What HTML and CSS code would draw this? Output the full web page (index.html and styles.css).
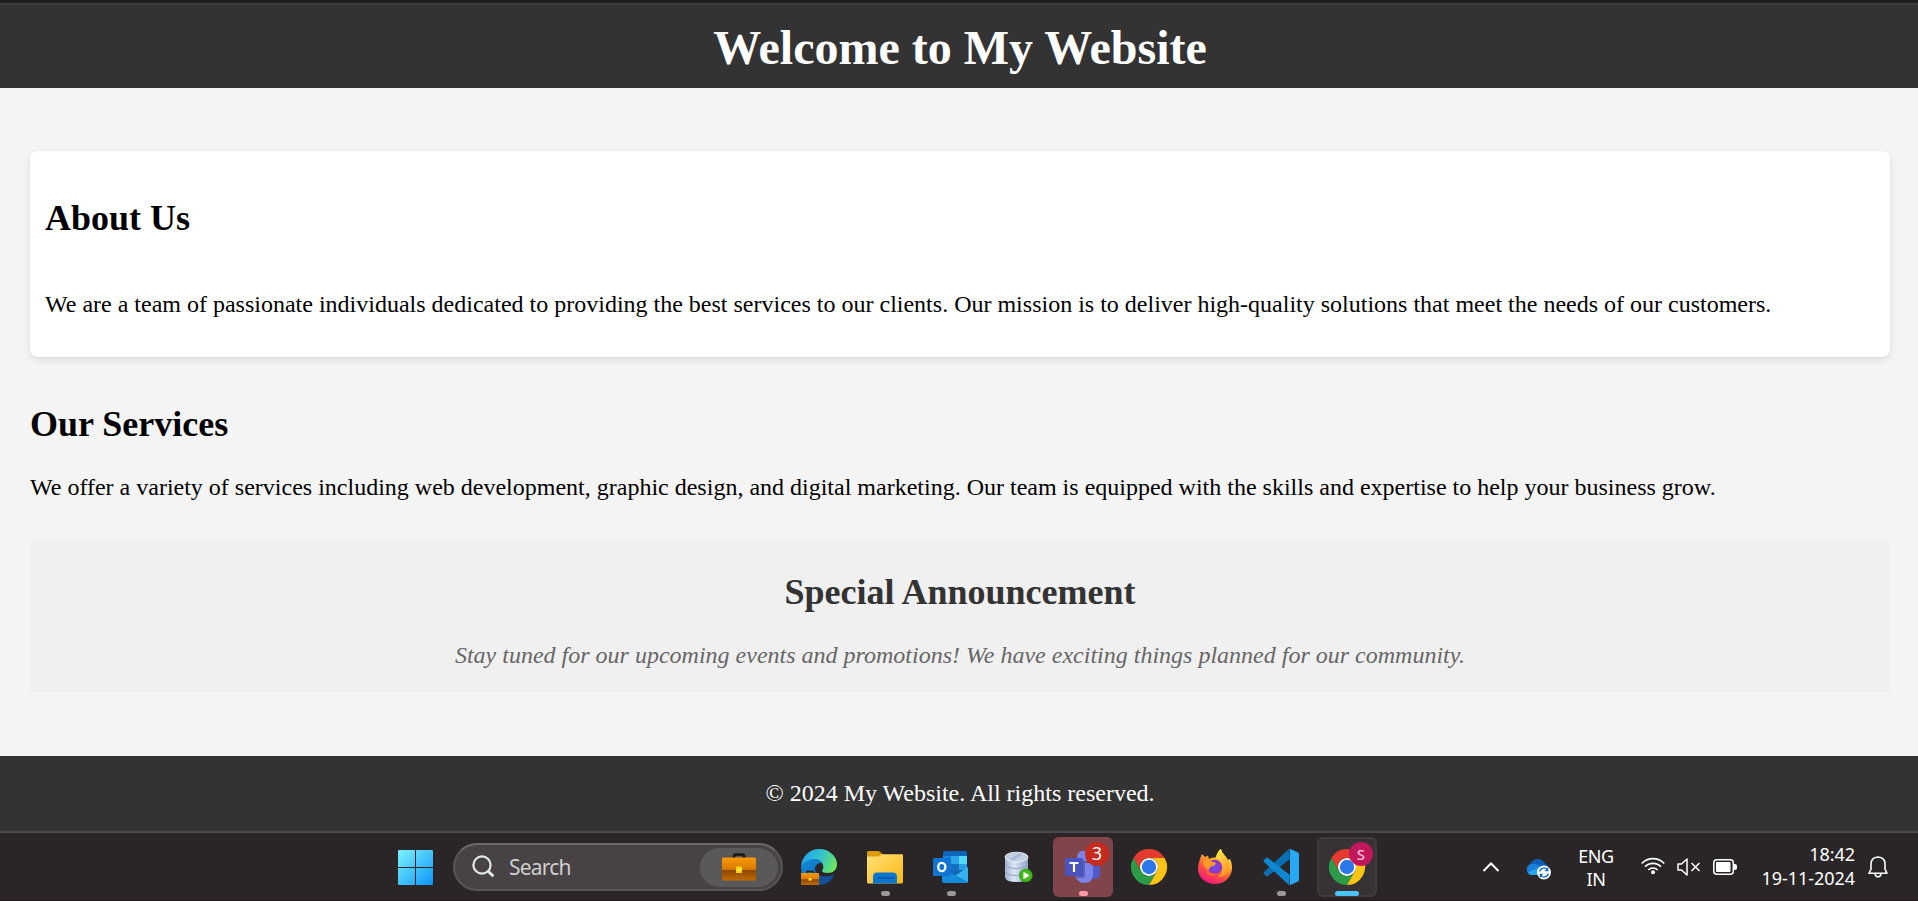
FILE: index.html
```html
<!DOCTYPE html>
<html lang="en">
<head>
<meta charset="utf-8">
<title>My Website</title>
<link rel="stylesheet" href="styles.css">
</head>
<body>
<header class="site-header"><h1>Welcome to My Website</h1></header>
<main class="content">
  <section class="card">
    <h2>About Us</h2>
    <p>We are a team of passionate individuals dedicated to providing the best services to our clients. Our mission is to deliver high-quality solutions that meet the needs of our customers.</p>
  </section>
  <section class="services">
    <h2>Our Services</h2>
    <p>We offer a variety of services including web development, graphic design, and digital marketing. Our team is equipped with the skills and expertise to help your business grow.</p>
  </section>
  <section class="announcement">
    <h2>Special Announcement</h2>
    <p>Stay tuned for our upcoming events and promotions! We have exciting things planned for our community.</p>
  </section>
</main>
<footer class="site-footer"><p>© 2024 My Website. All rights reserved.</p></footer>

<nav class="taskbar">
  <svg class="start" width="35" height="35" viewBox="0 0 35 35">
    <defs><linearGradient id="win" gradientUnits="userSpaceOnUse" x1="0" y1="0" x2="35" y2="35"><stop offset="0" stop-color="#7cf3ff"/><stop offset=".5" stop-color="#45c4fb"/><stop offset="1" stop-color="#0a94f8"/></linearGradient></defs>
    <path fill="url(#win)" d="M1 0h16v17H0V1q0-1 1-1zM18 0h16q1 0 1 1v16H18zM0 18h17v17H1q-1 0-1-1zM18 18h17v16q0 1-1 1H18z"/>
  </svg>
  <div class="search">
    <svg class="magnifier" width="24" height="24" viewBox="0 0 24 24" fill="none" stroke="#e4e8ea" stroke-width="2.2"><circle cx="10" cy="10" r="8.6"/><path stroke-width="3" d="M16 16l5.300 5.300"/></svg>
    <span class="search-label">Search</span>
    <div class="search-highlight">
      <svg width="34" height="28" viewBox="0 0 34 28">
        <defs><linearGradient id="case" x1="0" y1="0" x2="0" y2="1"><stop offset="0" stop-color="#fb9a00"/><stop offset=".52" stop-color="#d87a00"/><stop offset=".55" stop-color="#8d4800"/><stop offset="1" stop-color="#c16b00"/></linearGradient></defs>
        <path d="M12 5V3q0-1.5 2-1.500h6q2 0 2 1.500v2" fill="none" stroke="#161616" stroke-width="2.600"/>
        <rect y="4.500" width="34" height="23" rx="1.500" fill="url(#case)"/>
        <rect x="14" y="13.500" width="6" height="6.500" fill="#ffd200"/><rect x="16" y="16" width="3" height="1.500" fill="#fff09a"/>
      </svg>
    </div>
  </div>
  <div class="apps">
    <div class="app"><svg viewBox="-15 -12 66 60">
      <defs>
        <linearGradient id="e1" x1="0" y1=".3" x2="1" y2=".6"><stop offset="0" stop-color="#23a5e8"/><stop offset=".5" stop-color="#32c4cf"/><stop offset="1" stop-color="#6fe65b"/></linearGradient>
        <linearGradient id="e2" x1="0" y1="0" x2=".6" y2="1"><stop offset="0" stop-color="#1491dc"/><stop offset="1" stop-color="#0a62b5"/></linearGradient>
      </defs>
      <path fill="#12509b" d="M14 14C12 25 20 30 33 26C30 33 24 36 17 36C10 34 5 22 14 14z"/>
      <path fill="url(#e2)" d="M0 18C1 8 19 7 22 15C18 13 14 17 14 21C14 28 17 32 19 35C8 37 0 29 0 18z"/>
      <path fill="#2a2627" d="M22 15C18 12 14 16 14 20Q15 25 21 26L27 24Q21 24 21 22Q23 19 22 15z"/>
      <path fill="url(#e1)" d="M0 17C1 7 9 0 18 0C29 0 36 8 36 15C36 21 32 24 27 24C23 24 21 23 21 22C21 21 23 20 22 16C20 8 6 8 0 17z"/>
      <path d="M6 24v-1.500h6V24" fill="none" stroke="#222" stroke-width="1.500"/>
      <rect y="24" width="18" height="12" rx=".7" fill="url(#case)"/><rect x="7.600" y="29" width="3" height="2.600" fill="#ffd83a"/>
    </svg></div>
    <div class="app"><svg viewBox="-15 -12 66 60">
      <defs><linearGradient id="fold" x1="0" y1="0" x2="1" y2="1"><stop offset="0" stop-color="#ffe178"/><stop offset="1" stop-color="#f9b812"/></linearGradient></defs>
      <path fill="#dd9c06" d="M0 3.500Q0 2 1.500 2H11q1 0 2 1l3 2.500V12H0z"/>
      <path fill="url(#fold)" d="M0 8.500Q0 7.500 1 7.500h10l4-2.300h20q1 0 1 1V33q0 1.600-1.600 1.600H1.600Q0 34.600 0 33z"/>
      <path fill="#0d76cf" d="M6 34.600V28q0-4.400 4.400-4.400h15.200Q30 23.600 30 28v6.600z"/><path fill="#0c5da8" d="M12 28h13.500q1 0 1 1t-1 1H11.500q-1 0-1-1t1-1z"/>
    </svg><i class="dot"></i></div>
    <div class="app"><svg viewBox="-15 -12 66 60">
      <rect x="10" y="2" width="24" height="22" rx="1.500" fill="#0b65bb"/>
      <path fill="#1485da" d="M10 7h8v8h-8z"/><path fill="#2ca4e9" d="M18 7h8v8h-8z"/><path fill="#4fd8fc" d="M26 7h8v8h-8z"/><path fill="#1470bf" d="M18 15h8v7h-8z"/><path fill="#27a0e8" d="M26 15h8v6h-8z"/>
      <path fill="#1668b4" d="M18 22h10l-6 5h-6z"/>
      <path fill="#35b2ef" d="M35 18v14q0 2-2 2H11z"/><path fill="#168bdd" d="M9 19l26 14q-.6 1-2 1H11q-2 0-2-2z"/>
      <rect y="9" width="18" height="18" rx="1.500" fill="#0f75d2"/><ellipse cx="8.800" cy="18" rx="3.600" ry="4.200" fill="none" stroke="#fff" stroke-width="2.300"/>
    </svg><i class="dot"></i></div>
    <div class="app"><svg viewBox="-15 -12 66 60">
      <defs><linearGradient id="db"><stop offset="0" stop-color="#a3b5d1"/><stop offset=".4" stop-color="#dbe5f4"/><stop offset="1" stop-color="#8fa5c9"/></linearGradient><radialGradient id="play"><stop offset="0" stop-color="#5fd02a"/><stop offset="1" stop-color="#35a812"/></radialGradient></defs>
      <path fill="url(#db)" d="M6 8v20q0 5 11.500 5T29 28V8z"/><ellipse cx="17.500" cy="8" rx="11.500" ry="4.800" fill="#c3d0e4" stroke="#f2f5fa" stroke-width=".8"/>
      <path d="M12 11L22 5" stroke="#a9b9d3" stroke-width="3"/>
      <path d="M6 15q1 4.500 11.500 4.500T29 15M6 22q1 4.500 11.500 4.500T29 22" fill="none" stroke="#8b9fc2" stroke-width=".9"/>
      <circle cx="26.800" cy="26.500" r="6.800" fill="url(#play)"/><path fill="#fff" d="M24.500 22.700v7.600l6-3.800z"/>
    </svg></div>
    <div class="app app-alert"><svg viewBox="-15 -12 66 60">
      <path fill="#5059c9" d="M26 15h9v9q0 6-6 6h-3z"/><circle cx="18" cy="7.500" r="5.800" fill="#7b83eb"/>
      <path fill="#7b83eb" d="M12 14h16v11q0 9-9 9-6 0-8-6z"/>
      <path fill="#5960bd" d="M12 11h7q1 0 1 1v14q0 3-2 3h-6z"/>
      <rect y="9" width="18" height="18" rx="1.500" fill="#4b53bc"/><path d="M4.500 14h9M9 14v9" stroke="#fff" stroke-width="2.200"/>
    </svg><b class="badge badge-red">3</b><i class="dot dot-pink"></i></div>
    <div class="app"><svg viewBox="-15 -12 66 60">
      <g id="chrome"><path fill="#e33b2e" d="M2.400 9A18 18 0 0 1 33.600 9H18A9 9 0 0 0 10.200 22.500z"/><path fill="#2c9b48" d="M2.400 9A18 18 0 0 0 18 36L25.800 22.500A9 9 0 0 1 10.200 22.500z"/><path fill="#fdc413" d="M33.600 9A18 18 0 0 1 18 36L25.800 22.500A9 9 0 0 0 18 9z"/><circle cx="18" cy="18" r="9" fill="#fff"/><circle cx="18" cy="18" r="7.200" fill="#2b78ea"/></g>
    </svg></div>
    <div class="app"><svg viewBox="-15 -12 66 60">
      <defs><linearGradient id="ff" x1=".8" y1="0" x2=".3" y2="1"><stop offset="0" stop-color="#fff44f"/><stop offset=".35" stop-color="#ffb42e"/><stop offset=".65" stop-color="#ff553d"/><stop offset="1" stop-color="#f01383"/></linearGradient><linearGradient id="ffy" x1="0" y1="0" x2=".5" y2="1"><stop offset="0" stop-color="#fff44f"/><stop offset="1" stop-color="#ff9928"/></linearGradient><radialGradient id="ffp"><stop offset="0" stop-color="#6f4df2"/><stop offset="1" stop-color="#9434ba"/></radialGradient></defs>
      <path fill="url(#ff)" d="M1 20C1 14 3 10 5 5L8 8L11 6.500L12 10C15 8 18 9 19 8C20 4 22 1 24 0C25 5 29 7 31 11L33 10C35 14 35 17 35 20C34 29 27 35 18 35C8 35 1 28 1 20z"/>
      <path fill="url(#ffy)" d="M19 8C20 4 22 1 24 0C25 5 31 8 32 15C33 23 28 29 21 28C27 24 28 15 19 8z"/>
      <circle cx="18" cy="18" r="7.200" fill="url(#ffp)"/>
      <path fill="#ff9b28" d="M6 12Q10 10 16 13L19 14Q18 17 14 17.500Q12 18 12 21Q7 20 6 12z"/>
      <path fill="#ff642f" d="M10 20Q13 26 20 24Q16 29 10 25z"/>
    </svg></div>
    <div class="app"><svg viewBox="-15 -12 66 60">
      <path fill="#0a70b5" d="M26 0L1 23q-1 1 0 2l2 2q1 .800 2 0L27 10z"/><path fill="#0d87d2" d="M26 36L1 13q-1-1 0-2l2-2q1-.800 2 0L27 26z"/>
      <path fill="#27a8f2" d="M26 0q1-.300 2 .200l7 3.300q1 .500 1 1.500v26q0 1-1 1.500l-7 3.300q-1 .500-2 .200 1-1 1-2V2q0-1-1-2z"/>
    </svg><i class="dot"></i></div>
    <div class="app app-active"><svg viewBox="-15 -12 66 60"><use href="#chrome"/></svg><b class="badge badge-pink">S</b><i class="dot dot-blue"></i></div>
  </div>
  <div class="tray">
    <svg class="chevron" width="18" height="12" viewBox="0 0 18 12" fill="none" stroke="#fff" stroke-width="2"><path d="M1.500 10L9 2.500l7.500 7.500"/></svg>
    <svg class="cloud" width="26" height="22" viewBox="0 0 26 22">
      <path fill="#0b5fb5" d="M4 7C6 0 15-1 18.500 5q4 2 4 6L12 12z"/><path fill="#1581dc" d="M6 17C-1 17-1 6 6 6q5-1 9 4l-5 7z"/><path fill="#2aa5ec" d="M2 14.500L14 9q5-1 7 3v5H6q-2.500 0-4-2.500z"/>
      <circle cx="18" cy="14.500" r="7" fill="#fff"/><path d="M13.700 13.500a4.500 4.500 0 0 1 8-1.700m0-2v2.700h-2.500M22.300 15.500a4.500 4.500 0 0 1-8 1.700m0 2v-2.700h2.500" fill="none" stroke="#0c6fc8" stroke-width="1.300"/>
    </svg>
    <div class="language"><span>ENG</span><span>IN</span></div>
    <svg class="wifi" width="24" height="18" viewBox="0 0 24 18" fill="none" stroke="#fff" stroke-width="1.600"><path d="M.700 6.500a15.500 15.500 0 0 1 22.600 0M4 9.800a11 11 0 0 1 16 0M7.300 13a6.600 6.600 0 0 1 9.400 0"/><circle cx="12" cy="15.200" r="2" fill="#fff" stroke="none"/></svg>
    <svg class="volume" width="24" height="18" viewBox="0 0 24 18" fill="none" stroke="#fff" stroke-width="1.500"><path stroke-linejoin="round" d="M1 6h3.500l5.500-5v16l-5.500-5H1z"/><path d="M14.500 5l8 8m0-8l-8 8"/></svg>
    <svg class="battery" width="24" height="16" viewBox="0 0 24 16"><rect x=".8" y=".8" width="19.500" height="14.400" rx="3" fill="none" stroke="#fff" stroke-width="1.500"/><rect x="3" y="3" width="14.500" height="10" rx="1" fill="#fff"/><path fill="#fff" d="M21 5h1q2 0 2 2v2q0 2-2 2h-1z"/></svg>
    <div class="clock"><span>18:42</span><span>19-11-2024</span></div>
    <svg class="bell" width="20" height="22" viewBox="0 0 20 22" fill="none" stroke="#fff" stroke-width="1.600"><path stroke-linejoin="round" d="M10 1Q3 1.500 3 8v5l-2 4.300h18L17 13V8q0-6.500-7-7z"/><path d="M7 17.800q.5 3 3 3t3-3"/></svg>
  </div>
</nav>
</body>
</html>
```

FILE: styles.css
```css
* { box-sizing: border-box; }
body {
  margin: 0;
  height: 901px;
  overflow: hidden;
  display: flex;
  flex-direction: column;
  background: #f4f4f4;
  color: #000;
  font-family: "Liberation Serif", "Times New Roman", serif;
  font-size: 24px;
  line-height: 28px;
}
h1, h2, p { margin: 0; white-space: nowrap; }
h1 { font-size: 48px; line-height: 56px; }
h2 { font-size: 36px; line-height: 42px; }

.site-header {
  height: 88px;
  border-top: 3px solid #1f1f1f;
  box-shadow: inset 0 2px #3b3b3b;
  padding: 17px 0 0 2px;
  background: #333;
  color: #fff;
  text-align: center;
}
.content { height: 668px; padding: 63px 28px 0 30px; }
.card {
  height: 206px;
  padding: 46px 15px 0;
  background: #fff;
  border-radius: 7.5px;
  box-shadow: 0 3px 7.5px rgba(0, 0, 0, .1);
}
.card p { margin-top: 51px; }
.services { padding: 46px 0 39px; }
.services p, .announcement p { margin-top: 28px; }
.announcement {
  height: 153px;
  padding-top: 31px;
  background: #f0f0f0;
  color: #333;
  text-align: center;
}
.announcement p { color: #666; font-style: italic; }
.site-footer {
  height: 75px;
  padding: 23px 0 0 2px;
  background: #333;
  color: #fff;
  text-align: center;
}

.taskbar {
  height: 70px;
  display: flex;
  align-items: flex-start;
  border-top: 2px solid #4a4849;
  border-bottom: 1px solid #20151a;
  padding-left: 398px;
  background: #2a2627;
  color: #fff;
  font-family: "Noto Sans", sans-serif;
}
.start { margin-top: 17px; }
.search {
  width: 330px;
  height: 48px;
  margin: 10px 3px 0 20px;
  padding: 0 3px 0 17px;
  display: flex;
  align-items: center;
  background: #474344;
  border: 2px solid #575455;
  border-top-color: #6b6869;
  border-radius: 24px;
}
.search-label { margin-left: 13px; color: #cfcdce; font-size: 21px; letter-spacing: -.8px; }
.search-highlight {
  width: 78px;
  height: 39px;
  margin-left: auto;
  display: flex;
  align-items: center;
  justify-content: center;
  border-radius: 20px;
  background: #5a5858;
}
.apps { display: flex; margin-top: 4px; }
.app { position: relative; width: 66px; height: 60px; }
.app svg { display: block; width: 66px; height: 60px; position: relative; }
.app-alert::before, .app-active::before {
  content: "";
  position: absolute;
  inset: 0 3px;
  border-radius: 6px;
}
.app-alert::before { background: #80454a; }
.app-active::before { background: #373334; border: 2px solid #403c3d; }
.dot {
  position: absolute;
  left: 29px;
  top: 54px;
  width: 9px;
  height: 5px;
  border-radius: 2.5px;
  background: #9b999a;
}
.dot-pink { background: #ff9ba4; }
.dot-blue { left: 21px; width: 24px; background: #4cc2ff; }
.badge {
  position: absolute;
  left: 35px;
  top: 5px;
  width: 24px;
  height: 24px;
  border-radius: 50%;
  text-align: center;
  line-height: 24px;
  font-weight: 400;
}
.badge-red { background: #c42b1c; font-size: 18px; line-height: 23px; }
.badge-pink { background: #c2185b; color: #f3c3d6; font-size: 15px; font-weight: 500; }

.tray { display: flex; margin-left: 102px; }
.chevron { margin-top: 28px; }
.cloud { margin: 25px 0 0 26px; }
.language {
  width: 50px;
  margin: 12px 0 0 19px;
  display: flex;
  flex-direction: column;
  align-items: center;
  font-size: 18px;
  line-height: 22.5px;
  letter-spacing: -.4px;
}
.wifi { margin: 24px 0 0 20px; }
.volume { margin: 25px 0 0 12px; }
.battery { margin: 26px 0 0 12px; }
.clock {
  width: 108px;
  margin: 9px 0 0 10px;
  display: flex;
  flex-direction: column;
  align-items: flex-end;
  font-size: 18px;
  line-height: 24px;
  letter-spacing: -.05px;
}
.bell { margin: 23px 0 0 13px; }
```
